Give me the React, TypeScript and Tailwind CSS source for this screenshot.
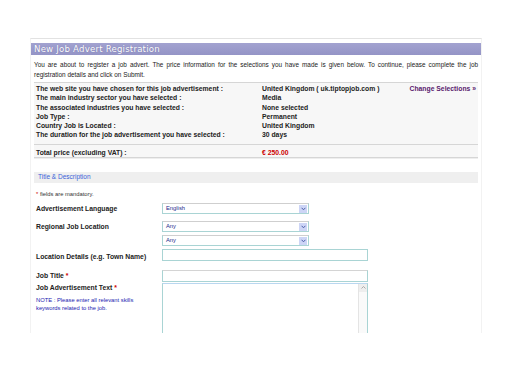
const SUMMARY = [
  ["The web site you have chosen for this job advertisement :", "United Kingdom ( uk.tiptopjob.com )"],
  ["The main industry sector you have selected :", "Media"],
  ["The associated industries you have selected :", "None selected"],
  ["Job Type :", "Permanent"],
  ["Country Job is Located :", "United Kingdom"],
  ["The duration for the job advertisement you have selected :", "30 days"],
];

function Select({ value }: { value: string }) {
  return (
    <div className="flex h-[11px] w-[147px] items-center justify-between border border-[#a9d4d4] border-t-[#cfcfcf] bg-white">
      <span className="pl-[3px] text-[5.8px] font-normal leading-none text-[#1c2a8c]">{value}</span>
      <span className="mr-[1px] flex h-[8px] w-[8px] items-center justify-center bg-[#cdd5f6] text-[#4d5fa8]">
        <svg width="5" height="4" viewBox="0 0 5 4">
          <path d="M0.6 0.8 L2.5 2.8 L4.4 0.8" fill="none" stroke="currentColor" strokeWidth="1" />
        </svg>
      </span>
    </div>
  );
}

export default function App() {
  return (
    <div className="h-[367px] w-[515px] overflow-hidden bg-white pl-[30px] pt-[38px] font-['Liberation_Sans',Arial,sans-serif] text-[#222]">
      <div className="h-[295px] w-[452px] overflow-hidden border-x border-t border-x-[#f2f2f2] border-t-[#e2e2e2]">
        <div className="mt-[4px] flex h-[12px] items-center bg-gradient-to-b from-[#a2a2d0] to-[#9494c6] pl-[3px] font-['DejaVu_Sans',Verdana,sans-serif] text-[8.6px] tracking-[0.2px] text-white [text-shadow:0_0_1px_#6a6aa0]">
          New Job Advert Registration
        </div>

        <div className="px-[3px]">
          <p className="mt-[5px] text-justify text-[6.4px] leading-[9.5px] text-[#222]">
            You are about to register a job advert. The price information for the selections you have made is given below. To continue, please complete the job registration details and click on Submit.
          </p>

          <div className="mt-[3px] w-[444px] whitespace-nowrap border-t border-[#d6d6d6] bg-[#f7f7f7] pt-[1px] text-[6.8px] font-bold">
            {SUMMARY.map(([label, value], i) => (
              <div key={label} className="grid h-[9.3px] grid-cols-[226px_140px_1fr] items-center pl-[2px]">
                <span>{label}</span>
                <span>{value}</span>
                {i === 0 ? <span className="pr-[2px] text-right text-[#5a1a6e]">Change Selections »</span> : <span />}
              </div>
            ))}
            <div className="mt-[4px] grid h-[14px] grid-cols-[226px_1fr] items-center border-y border-[#d6d6d6] pl-[2px] pt-[3px] shadow-[0_1px_0_#eee]">
              <span>Total price (excluding VAT) :</span>
              <span className="text-[#cc0000]">€ 250.00</span>
            </div>
          </div>

          <div className="mt-[14px] flex h-[11px] w-[444px] items-center bg-[#efefef] pl-[4px] text-[6.5px] text-[#3b5fd9]">
            Title &amp; Description
          </div>

          <p className="mt-[7px] pl-[2px] text-[5.8px] text-[#333]">
            <span className="text-[#cc0000]">*</span> fields are mandatory.
          </p>

          <div className="mt-[5px] grid grid-cols-[126px_1fr] gap-y-[3px] whitespace-nowrap pl-[2px] text-[6.8px] font-bold">
            <span className="pt-[1px]">Advertisement Language</span>
            <div className="pb-[4px]">
              <Select value="English" />
            </div>

            <span className="pt-[1px]">Regional Job Location</span>
            <div className="flex flex-col gap-[3px]">
              <Select value="Any" />
              <Select value="Any" />
            </div>

            <span className="pt-[3px]">Location Details (e.g. Town Name)</span>
            <div className="h-[12px] w-[206px] border border-[#a9d4d4] bg-white" />

            <span className="pt-[5px]">
              Job Title <span className="text-[#cc0000]">*</span>
            </span>
            <div className="mt-[4px] h-[12px] w-[206px] border border-[#a9d4d4] border-t-[#d4d4d4] bg-white" />

            <div className="-mt-[2px] flex flex-col">
              <span>
                Job Advertisement Text <span className="text-[#cc0000]">*</span>
              </span>
              <span className="mt-[3px] text-[5.8px] leading-[8.5px] font-normal text-[#1a1ab0]">
                NOTE : Please enter all relevant skills
                <br />
                keywords related to the job.
              </span>
            </div>
            <div className="-mt-[2px] flex h-[60px] w-[206px] border border-[#a9d4d4] border-t-[#b9d7f0] bg-white">
              <div className="flex-1" />
              <div className="w-[9px] border-l border-[#e4e4e4] bg-[#fafafa]">
                <div className="flex h-[8px] items-center justify-center bg-[#eee] text-[#999]">
                  <svg width="5" height="3" viewBox="0 0 5 3">
                    <path d="M0.5 2.5 L2.5 0.5 L4.5 2.5" fill="none" stroke="currentColor" strokeWidth="0.8" />
                  </svg>
                </div>
              </div>
            </div>
          </div>
        </div>
      </div>
    </div>
  );
}
